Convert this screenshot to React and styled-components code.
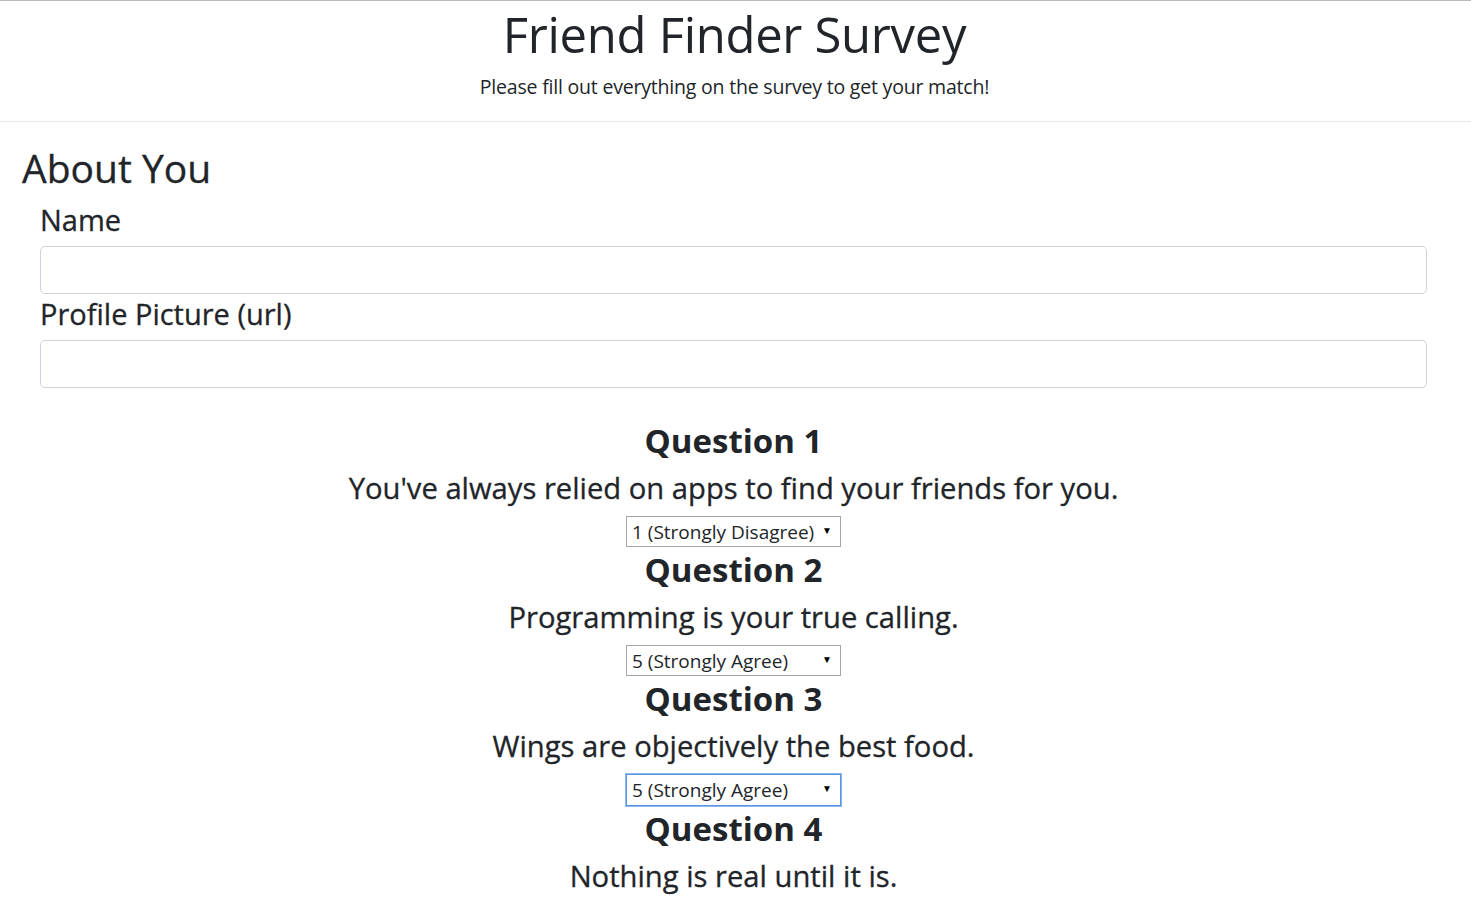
import React from "react";
import styled, { createGlobalStyle } from "styled-components";

const Global = createGlobalStyle`
  html, body { margin: 0; padding: 0; background: #fff; }
  body {
    font-family: "Open Sans", "Noto Sans", sans-serif;
    color: #212529;
  }
  * { box-sizing: border-box; }
`;

const Page = styled.div`
  border-top: 1px solid #b9b9b9;
  min-height: 900px;
`;

const Header = styled.header`
  display: flex;
  flex-direction: column;
  align-items: center;
  padding: 0 0 19px;
  border-bottom: 1px solid #e5e5e5;
  margin-left: -2px;
`;

const Title = styled.h1`
  margin: 0;
  font-size: 49px;
  font-weight: 400;
  line-height: 67px;
  letter-spacing: -0.3px;
`;

const Lead = styled.p`
  margin: 4px 0 0;
  font-size: 19.5px;
  font-weight: 400;
  line-height: 30px;
  letter-spacing: -0.2px;
`;

const Main = styled.main`
  padding: 22px 44px 0 22px;
`;

const SectionTitle = styled.h2`
  margin: 0;
  font-size: 39px;
  font-weight: 400;
  line-height: 48px;
  -webkit-text-stroke: 0.3px #212529;
`;

const Fields = styled.div`
  display: flex;
  flex-direction: column;
  padding-left: 18px;
  margin-top: 11px;
`;

const Label = styled.label`
  font-size: 29px;
  font-weight: 400;
  line-height: 34px;
  margin-bottom: 9px;
  -webkit-text-stroke: 0.3px #212529;
`;

const Input = styled.input`
  height: 48px;
  width: 100%;
  border: 1px solid #ced4da;
  border-radius: 5px;
  font-size: 20px;
  padding: 8px 16px;
  margin-bottom: 3px;
  font-family: inherit;
`;

const Questions = styled.div`
  display: flex;
  flex-direction: column;
  align-items: center;
  margin-top: 31px;
  margin-left: 18px;
`;

const Question = styled.section`
  display: flex;
  flex-direction: column;
  align-items: center;
  margin-bottom: 4px;
`;

const QTitle = styled.h3`
  margin: 0;
  font-size: 33px;
  font-weight: 700;
  line-height: 38px;
`;

const QText = styled.p`
  margin: 11px 0 11px;
  font-size: 29.2px;
  font-weight: 400;
  line-height: 34px;
  -webkit-text-stroke: 0.3px #212529;
`;

const SelectWrap = styled.div`
  position: relative;
  width: 215px;
`;

const Select = styled.select`
  appearance: none;
  -webkit-appearance: none;
  display: block;
  width: 215px;
  height: ${(p) => (p.$focused ? "32px" : "31px")};
  border: 1px solid ${(p) => (p.$focused ? "#5a95e6" : "#a6a6a6")};
  box-shadow: ${(p) => (p.$focused ? "0 0 0 1px #8db6ef" : "none")};
  border-radius: 0;
  background: #fff;
  color: #212529;
  font-family: "Open Sans", "Noto Sans", sans-serif;
  font-size: 19px;
  padding: 0 0 0 5px;
  outline: none;
`;

const Arrow = styled.span`
  position: absolute;
  right: 9px;
  top: 9px;
  font-size: 10px;
  line-height: 10px;
  color: #000;
  pointer-events: none;
`;

const options = [
  "1 (Strongly Disagree)",
  "2",
  "3",
  "4",
  "5 (Strongly Agree)",
];

const questions = [
  { text: "You've always relied on apps to find your friends for you.", value: 0 },
  { text: "Programming is your true calling.", value: 4 },
  { text: "Wings are objectively the best food.", value: 4, focused: true },
  { text: "Nothing is real until it is.", value: 0 },
];

export default function App() {
  return (
    <Page>
      <Global />
      <Header>
        <Title>Friend Finder Survey</Title>
        <Lead>Please fill out everything on the survey to get your match!</Lead>
      </Header>
      <Main>
        <SectionTitle>About You</SectionTitle>
        <Fields>
          <Label htmlFor="name">Name</Label>
          <Input id="name" type="text" />
          <Label htmlFor="photo">Profile Picture (url)</Label>
          <Input id="photo" type="text" />
        </Fields>
        <Questions>
          {questions.map((q, i) => (
            <Question key={i}>
              <QTitle>Question {i + 1}</QTitle>
              <QText>{q.text}</QText>
              <SelectWrap>
                <Select defaultValue={options[q.value]} $focused={q.focused}>
                  {options.map((o) => (
                    <option key={o} value={o}>{o}</option>
                  ))}
                </Select>
                <Arrow>▼</Arrow>
              </SelectWrap>
            </Question>
          ))}
        </Questions>
      </Main>
    </Page>
  );
}
